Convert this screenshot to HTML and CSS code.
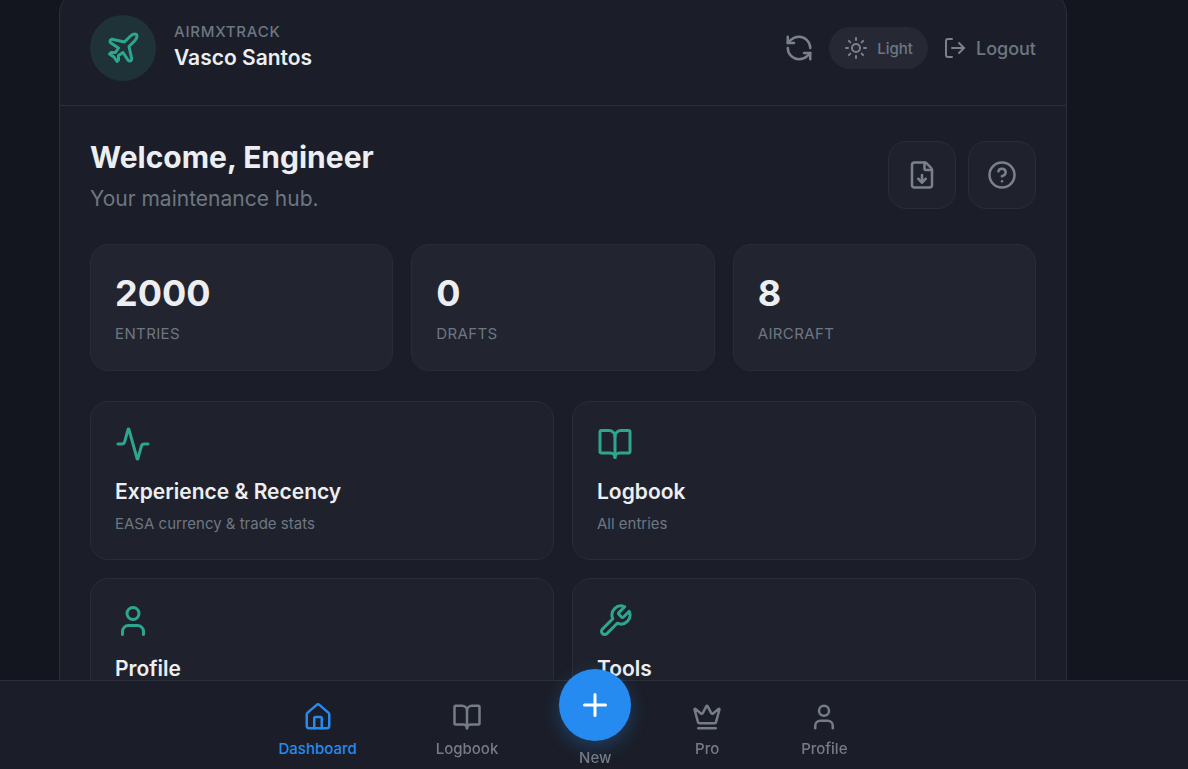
FILE: index.html
```html
<!DOCTYPE html>
<html lang="en">
<head>
<meta charset="utf-8">
<meta name="viewport" content="width=device-width, initial-scale=1">
<title>AirMxTrack</title>
<link rel="stylesheet" href="styles.css">
</head>
<body>
<svg class="sprite" aria-hidden="true">
  <symbol id="book" viewBox="0 0 24 24"><path d="M12 7v14"/><path d="M3 18a1 1 0 0 1-1-1V4a1 1 0 0 1 1-1h5a4 4 0 0 1 4 4 4 4 0 0 1 4-4h5a1 1 0 0 1 1 1v13a1 1 0 0 1-1 1h-6a3 3 0 0 0-3 3 3 3 0 0 0-3-3z"/></symbol>
  <symbol id="user" viewBox="0 0 24 24"><path d="M19 21v-2a4 4 0 0 0-4-4H9a4 4 0 0 0-4 4v2"/><circle cx="12" cy="7" r="4"/></symbol>
</svg>
<main class="page">
  <div class="shell">
    <header class="topbar">
      <div class="brand">
        <span class="avatar"><svg class="icon icon-lg" viewBox="0 0 24 24"><path d="M17.8 19.2 16 11l3.5-3.5C21 6 21.5 4 21 3c-1-.5-3 0-4.5 1.5L13 8 4.8 6.2c-.5-.1-.9.1-1.1.5l-.3.5c-.2.5-.1 1 .3 1.3L9 12l-2 3H4l-1 1 3 2 2 3 1-1v-3l3-2 3.5 5.3c.3.4.8.5 1.3.3l.5-.2c.4-.3.6-.7.5-1.2z"/></svg></span>
        <div>
          <p class="app-name">AIRMXTRACK</p>
          <p class="user-name">Vasco Santos</p>
        </div>
      </div>
      <div class="actions">
        <button class="plain" aria-label="Refresh"><svg class="icon icon-md" viewBox="0 0 24 24"><path d="M21 12a9 9 0 0 0-9-9 9.75 9.75 0 0 0-6.74 2.74L3 8"/><path d="M3 3v5h5"/><path d="M3 12a9 9 0 0 0 9 9 9.75 9.75 0 0 0 6.74-2.74L21 16"/><path d="M16 16h5v5"/></svg></button>
        <button class="theme"><svg class="icon icon-sm" viewBox="0 0 24 24"><circle cx="12" cy="12" r="4"/><path d="M12 2v2M12 20v2M4.93 4.93l1.41 1.41M17.66 17.66l1.41 1.41M2 12h2M20 12h2M6.34 17.66l-1.41 1.41M19.07 4.93l-1.41 1.41"/></svg>Light</button>
        <button class="plain logout"><svg class="icon icon-sm" viewBox="0 0 24 24"><path d="m16 17 5-5-5-5"/><path d="M21 12H9"/><path d="M9 21H5a2 2 0 0 1-2-2V5a2 2 0 0 1 2-2h4"/></svg>Logout</button>
      </div>
    </header>
    <div class="content">
      <section class="welcome">
        <div>
          <h1>Welcome, Engineer</h1>
          <p class="subtitle">Your maintenance hub.</p>
        </div>
        <div class="tools">
          <button class="square" aria-label="Export"><svg class="icon icon-md" viewBox="0 0 24 24"><path d="M6 22a2 2 0 0 1-2-2V4a2 2 0 0 1 2-2h8a2.4 2.4 0 0 1 1.704.706l3.588 3.588A2.4 2.4 0 0 1 20 8v12a2 2 0 0 1-2 2z"/><path d="M14 2v5a1 1 0 0 0 1 1h5"/><path d="M12 18v-6"/><path d="m9 15 3 3 3-3"/></svg></button>
          <button class="square" aria-label="Help"><svg class="icon icon-md" viewBox="0 0 24 24"><circle cx="12" cy="12" r="10"/><path d="M9.09 9a3 3 0 0 1 5.83 1c0 2-3 3-3 3"/><path d="M12 17h.01"/></svg></button>
        </div>
      </section>
      <section class="stats">
        <div class="stat"><p class="number">2000</p><p class="label">ENTRIES</p></div>
        <div class="stat"><p class="number">0</p><p class="label">DRAFTS</p></div>
        <div class="stat"><p class="number">8</p><p class="label">AIRCRAFT</p></div>
      </section>
      <section class="tiles">
        <a class="tile" href="#experience">
          <svg class="icon icon-lg" viewBox="0 0 24 24"><path d="M22 12h-2.48a2 2 0 0 0-1.93 1.46l-2.35 8.36a.25.25 0 0 1-.48 0L9.24 2.18a.25.25 0 0 0-.48 0l-2.35 8.36A2 2 0 0 1 4.49 12H2"/></svg>
          <h2>Experience &amp; Recency</h2><p>EASA currency &amp; trade stats</p>
        </a>
        <a class="tile" href="#logbook">
          <svg class="icon icon-lg"><use href="#book"/></svg>
          <h2>Logbook</h2><p>All entries</p>
        </a>
        <a class="tile" href="#profile">
          <svg class="icon icon-lg"><use href="#user"/></svg>
          <h2>Profile</h2>
        </a>
        <a class="tile" href="#tools">
          <svg class="icon icon-lg" viewBox="0 0 24 24"><path d="M14.7 6.3a1 1 0 0 0 0 1.4l1.6 1.6a1 1 0 0 0 1.4 0l3.77-3.77a6 6 0 0 1-7.94 7.94l-6.91 6.91a2.12 2.12 0 0 1-3-3l6.91-6.91a6 6 0 0 1 7.94-7.94l-3.76 3.76z"/></svg>
          <h2>Tools</h2>
        </a>
      </section>
    </div>
  </div>
</main>
<nav class="bottom-nav">
  <div class="nav-items">
    <a class="nav-item active" href="#dashboard"><svg class="icon icon-md" viewBox="0 0 24 24"><path d="M15 21v-8a1 1 0 0 0-1-1h-4a1 1 0 0 0-1 1v8"/><path d="M3 10a2 2 0 0 1 .709-1.528l7-6a2 2 0 0 1 2.582 0l7 6A2 2 0 0 1 21 10v9a2 2 0 0 1-2 2H5a2 2 0 0 1-2-2z"/></svg>Dashboard</a>
    <a class="nav-item" href="#logbook"><svg class="icon icon-md"><use href="#book"/></svg>Logbook</a>
    <a class="nav-item new" href="#new"><span class="fab"><svg class="icon icon-lg" viewBox="0 0 24 24"><path d="M5 12h14M12 5v14"/></svg></span>New</a>
    <a class="nav-item" href="#pro"><svg class="icon icon-md" viewBox="0 0 24 24"><path d="M11.562 3.266a.5.5 0 0 1 .876 0L15.39 8.87a1 1 0 0 0 1.516.294L21.183 5.5a.5.5 0 0 1 .798.519l-2.834 10.246a1 1 0 0 1-.956.734H5.81a1 1 0 0 1-.957-.734L2.02 6.02a.5.5 0 0 1 .798-.519l4.276 3.664a1 1 0 0 0 1.516-.294z"/><path d="M5 21h14"/></svg>Pro</a>
    <a class="nav-item" href="#profile"><svg class="icon icon-md"><use href="#user"/></svg>Profile</a>
  </div>
</nav>
</body>
</html>
```
FILE: styles.css
```css
:root {
  --bg: #13161f;
  --panel: #1b1e28;
  --tile: #1f222c;
  --raised: #22252f;
  --line: #2c2f39;
  --text: #eceef1;
  --muted: #6d7782;
  --green: #2ea58e;
  --blue: #268bf0;
  --gutter: 62px;
}
* { box-sizing: border-box; }
html { scrollbar-width: none; }
body {
  margin: 0;
  background: var(--bg);
  color: var(--text);
  font: 15px/21px Inter, "Liberation Sans", sans-serif;
}
h1, h2, p { margin: 0; }
a { color: inherit; text-decoration: none; }
button { font: inherit; color: inherit; border: 0; background: none; padding: 0; cursor: pointer; }
.sprite { display: none; }
.icon { display: block; flex: none; fill: none; stroke: currentColor; stroke-width: 2; stroke-linecap: round; stroke-linejoin: round; }
.icon-sm { width: 24px; height: 24px; }
.icon-md { width: 30px; height: 30px; }
.icon-lg { width: 36px; height: 36px; }

.page { display: flow-root; padding: 0 calc(59px + var(--gutter)) 90px 59px; }
.shell { margin-top: -10px; border: 1px solid var(--line); border-radius: 24px; background: var(--panel); }
.topbar { display: flex; justify-content: space-between; align-items: center; padding: 24px 30px; border-bottom: 1px solid var(--line); }
.brand, .actions, .tools { display: flex; align-items: center; }
.brand { gap: 18px; }
.avatar { display: grid; place-items: center; width: 66px; height: 66px; border-radius: 50%; background: #1e3238; color: var(--green); }
.app-name { line-height: 20px; color: var(--muted); font-weight: 500; letter-spacing: 0.05em; }
.user-name { font-size: 21px; line-height: 32px; font-weight: 600; }
.actions { gap: 15px; color: var(--muted); font-weight: 500; }
.theme { display: flex; align-items: center; gap: 9px; height: 42px; padding: 0 15px; border-radius: 21px; background: #262933; }
.logout { display: flex; align-items: center; gap: 9px; font-size: 18px; }
.actions .icon { color: #7b818c; }

.content { padding: 30px; }
.welcome { display: flex; justify-content: space-between; align-items: center; margin-bottom: 30px; }
h1 { font-size: 30px; line-height: 42px; font-weight: 700; }
.subtitle { margin-top: 6px; font-size: 21px; line-height: 30px; color: var(--muted); }
.tools { gap: 12px; }
.square { display: grid; place-items: center; width: 68px; height: 68px; border: 1px solid #2a2d37; border-radius: 18px; background: var(--tile); color: #7b818c; }
.stats { display: grid; grid-template-columns: repeat(3, 1fr); gap: 18px; margin-bottom: 30px; }
.stat { padding: 24px; border: 1px solid #292c36; border-radius: 18px; background: var(--raised); }
.number { font-size: 36px; line-height: 48px; font-weight: 700; }
.label { margin-top: 5px; line-height: 24px; letter-spacing: 0.025em; color: var(--muted); }
.tiles { display: grid; grid-template-columns: repeat(2, 1fr); gap: 18px; }
.tile { min-height: 159px; padding: 24px; border: 1px solid #2a2d37; border-radius: 18px; background: var(--tile); }
.tile .icon { color: var(--green); }
h2 { margin-top: 15px; font-size: 21px; line-height: 30px; font-weight: 600; }
.tile p { margin-top: 6px; color: var(--muted); }

.bottom-nav { position: fixed; left: 0; right: 0; bottom: 0; padding-right: var(--gutter); border-top: 1px solid var(--line); background: var(--panel); }
.nav-items { display: flex; justify-content: space-around; max-width: 648px; height: 88px; margin: 0 auto; }
.nav-item { display: flex; flex-direction: column; align-items: center; gap: 6px; min-width: 66px; padding: 21px 18px 0; color: #767c87; font-weight: 500; }
.active { color: var(--blue); }
.new { padding: 0; margin-top: -12px; }
.fab { display: grid; place-items: center; width: 72px; height: 72px; border-radius: 50%; background: var(--blue); color: #fff; box-shadow: 0 6px 18px rgba(38, 139, 240, 0.3); }
```
